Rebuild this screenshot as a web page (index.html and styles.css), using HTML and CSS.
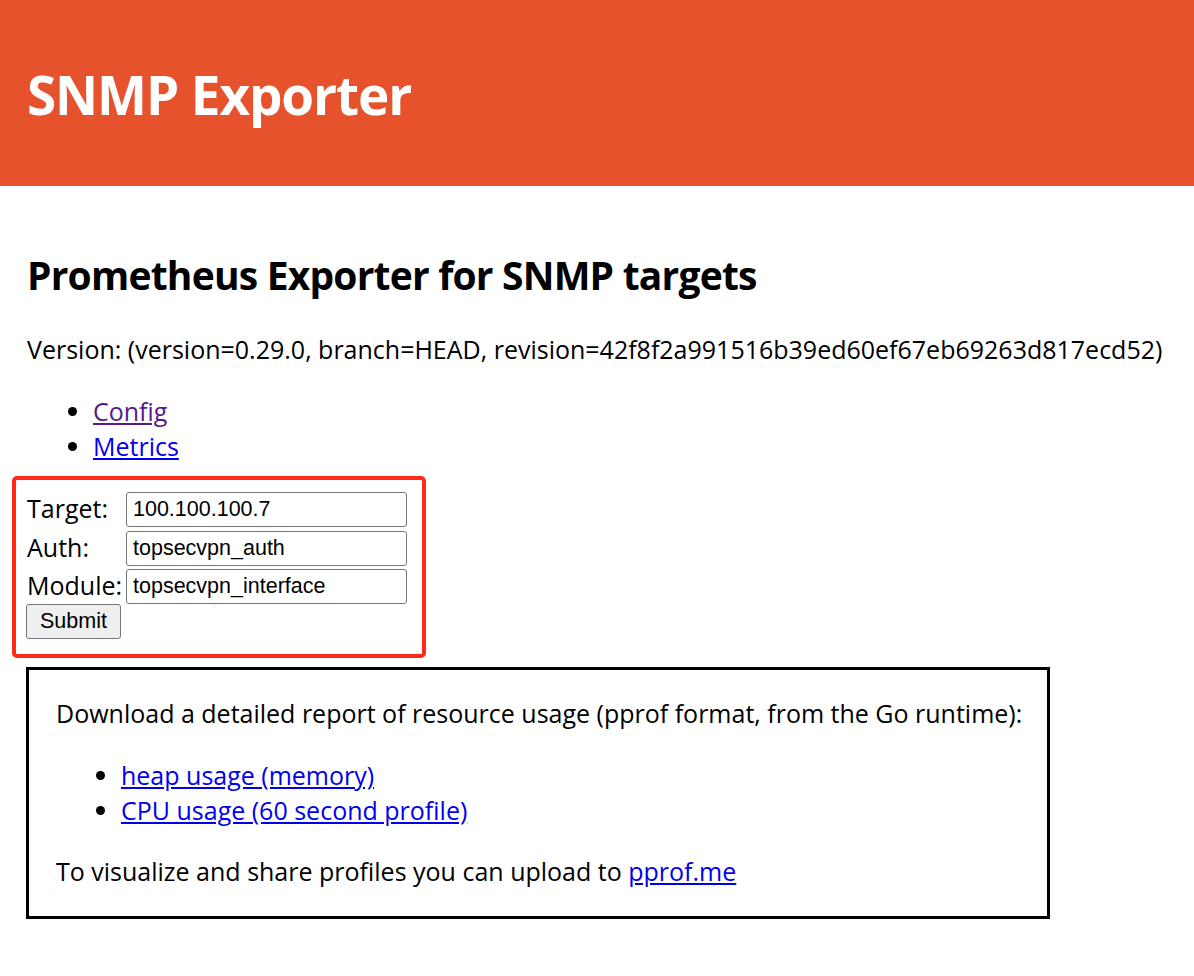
FILE: index.html
```html
<!DOCTYPE html>
<html lang="en">
<head>
<meta charset="utf-8">
<title>SNMP Exporter</title>
<link rel="stylesheet" href="styles.css">
</head>
<body>
<header class="top">
  <h1 class="brand">SNMP Exporter</h1>
</header>
<div class="main">
  <h2 class="title">Prometheus Exporter for SNMP targets</h2>
  <p class="version">Version: (version=0.29.0, branch=HEAD, revision=42f8f2a991516b39ed60ef67eb69263d817ecd52)</p>
  <ul class="links">
    <li><a class="visited" href="#config">Config</a></li>
    <li><a href="#metrics">Metrics</a></li>
  </ul>
  <div class="highlight">
    <form class="probe" action="#">
      <label class="lbl" for="target">Target:</label>
      <input class="field" id="target" type="text" value="100.100.100.7">
      <label class="lbl" for="auth">Auth:</label>
      <input class="field" id="auth" type="text" value="topsecvpn_auth">
      <label class="lbl" for="module">Module:</label>
      <input class="field" id="module" type="text" value="topsecvpn_interface">
      <button class="submit" type="submit">Submit</button>
    </form>
  </div>
  <div class="pprof">
    <p class="pp-text">Download a detailed report of resource usage (pprof format, from the Go runtime):</p>
    <ul class="pp-links">
      <li><a href="#heap">heap usage (memory)</a></li>
      <li><a href="#profile">CPU usage (60 second profile)</a></li>
    </ul>
    <p class="pp-text">To visualize and share profiles you can upload to <a href="#pprof">pprof.me</a></p>
  </div>
</div>
</body>
</html>
```

FILE: styles.css
```css
html, body {
  margin: 0;
  padding: 0;
  background: #fff;
}
body {
  font-family: "Open Sans", "Noto Sans", "DejaVu Sans", sans-serif;
  font-size: 25px;
  line-height: 35px;
  color: #000;
}
a {
  color: #0000ee;
}
a.visited {
  color: #551a8b;
}
.top {
  background: #e6522c;
  height: 186px;
  box-sizing: border-box;
  display: flex;
  align-items: center;
  padding: 3px 27px 0 27px;
}
.brand {
  margin: 0;
  color: #fff;
  font-size: 53px;
  line-height: 60px;
  letter-spacing: -1.1px;
  font-weight: 700;
}
.main {
  padding: 0 27px;
}
.title {
  margin: 61px 0 0 0;
  font-size: 39px;
  line-height: 56px;
  letter-spacing: -0.8px;
  font-weight: 700;
}
.version {
  margin: 29px 0 0 0;
}
.links {
  margin: 27px 0 0 0;
  padding-left: 66px;
}
.highlight {
  margin: 12px 0 0 -15px;
  width: 380px;
  border: 4px solid #ff2a1a;
  border-radius: 5px;
  padding: 12px 15px 11px 11px;
}
.probe {
  display: grid;
  grid-template-columns: 99px 281px;
  grid-auto-rows: 35px;
  row-gap: 3.5px;
  align-items: center;
}
.lbl {
  font-size: 25px;
  line-height: 33px;
  align-self: start;
}
.field {
  box-sizing: border-box;
  height: 35px;
  width: 281px;
  margin: 0;
  border: 1px solid #767676;
  border-radius: 3px;
  padding: 1px 6px;
  font-family: "Liberation Sans", Arial, sans-serif;
  font-size: 21.5px;
  color: #000;
  background: #fff;
}
.submit {
  grid-column: 1 / 2;
  justify-self: start;
  align-self: start;
  margin: -3.5px 0 0 -1px;
  box-sizing: border-box;
  height: 35px;
  width: 95px;
  border: 1px solid #767676;
  border-radius: 3px;
  background: #efefef;
  font-family: "Liberation Sans", Arial, sans-serif;
  font-size: 21.5px;
  color: #000;
  padding: 0;
}
.pprof {
  margin: 9px 0 0 -1px;
  border: 3px solid #000;
  width: fit-content;
  padding: 26px 25px 27px 27px;
}
.pp-text {
  margin: 0;
}
.pp-links {
  margin: 27px 0 26px 0;
  padding-left: 65px;
}
```
